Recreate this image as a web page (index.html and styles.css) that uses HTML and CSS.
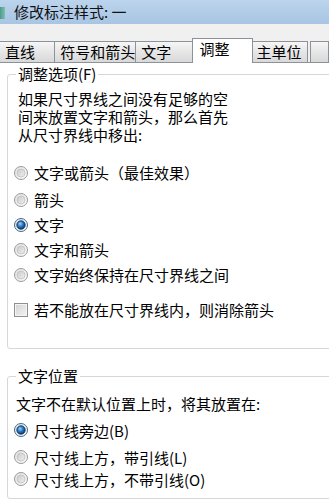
FILE: index.html
```html
<!DOCTYPE html>
<html lang="zh-CN">
<head>
<meta charset="utf-8">
<link rel="stylesheet" href="styles.css">
</head>
<body>
<div class="titlebar">
  <span class="appicon"></span>
  <span class="title">修改标注样式: 一</span>
</div>
<div class="tabbar">
  <div class="tab t1">直线</div>
  <div class="tab t2">符号和箭头</div>
  <div class="tab t3">文字</div>
  <div class="tab sel">调整</div>
  <div class="tab t5">主单位</div>
  <div class="tab t6"></div>
</div>
<div class="panel">
  <fieldset class="group g1">
    <legend>调整选项(F)</legend>
    <p class="desc d1">如果尺寸界线之间没有足够的空<br>间来放置文字和箭头，那么首先<br>从尺寸界线中移出:</p>
    <div class="opts">
      <div class="opt"><svg class="radio" viewBox="0 0 14 14"><use href="#r-off"/></svg><span>文字或箭头（最佳效果）</span></div>
      <div class="opt o2"><svg class="radio" viewBox="0 0 14 14"><use href="#r-off"/></svg><span>箭头</span></div>
      <div class="opt"><svg class="radio" viewBox="0 0 14 14"><use href="#r-on"/></svg><span>文字</span></div>
      <div class="opt"><svg class="radio" viewBox="0 0 14 14"><use href="#r-off"/></svg><span>文字和箭头</span></div>
      <div class="opt"><svg class="radio" viewBox="0 0 14 14"><use href="#r-off"/></svg><span>文字始终保持在尺寸界线之间</span></div>
    </div>
    <div class="opt check"><span class="box"></span><span>若不能放在尺寸界线内，则消除箭头</span></div>
  </fieldset>
  <fieldset class="group g2">
    <legend>文字位置</legend>
    <p class="desc d2">文字不在默认位置上时，将其放置在:</p>
    <div class="opts tight">
      <div class="opt"><svg class="radio" viewBox="0 0 14 14"><use href="#r-on"/></svg><span>尺寸线旁边(B)</span></div>
      <div class="opt p2"><svg class="radio" viewBox="0 0 14 14"><use href="#r-off"/></svg><span>尺寸线上方，带引线(L)</span></div>
      <div class="opt"><svg class="radio" viewBox="0 0 14 14"><use href="#r-off"/></svg><span>尺寸线上方，不带引线(O)</span></div>
    </div>
  </fieldset>
</div>

<svg class="defs" width="0" height="0" aria-hidden="true">
  <defs>
    <linearGradient id="gOut" x1="0" y1="0" x2="1" y2="1">
      <stop offset="0" stop-color="#e2e2e2"/>
      <stop offset="1" stop-color="#fbfbfb"/>
    </linearGradient>
    <linearGradient id="gIn" x1="0" y1="0" x2="1" y2="1">
      <stop offset="0" stop-color="#c9c9c9"/>
      <stop offset="1" stop-color="#f0f0f0"/>
    </linearGradient>
    <radialGradient id="gDot" cx="0.4" cy="0.35" r="0.7">
      <stop offset="0" stop-color="#9fd3ff"/>
      <stop offset="0.45" stop-color="#2a7fcf"/>
      <stop offset="1" stop-color="#0d2f5a"/>
    </radialGradient>
    <g id="r-off">
      <circle cx="7" cy="7" r="6.5" fill="url(#gOut)" stroke="#9a9a9a"/>
      <circle cx="7" cy="7" r="4" fill="url(#gIn)" stroke="#c2c2c2" stroke-width="0.8"/>
    </g>
    <g id="r-on">
      <circle cx="7" cy="7" r="6.5" fill="url(#gOut)" stroke="#3f6b8f"/>
      <circle cx="7" cy="7" r="4.2" fill="url(#gDot)" stroke="#0f2a48" stroke-width="0.8"/>
    </g>
  </defs>
</svg>
</body>
</html>
```
FILE: styles.css
```css
html, body {
  margin: 0;
  padding: 0;
}
body {
  width: 329px;
  height: 503px;
  overflow: hidden;
  background: #ffffff;
  color: #000;
  font-family: "Noto Sans CJK SC", "Liberation Sans", sans-serif;
  font-size: 15px;
}
.titlebar {
  height: 24px;
  display: flex;
  align-items: center;
  background: linear-gradient(#bcd4ec, #a8c5e3);
}
.appicon {
  width: 5px;
  height: 12px;
  margin-top: 1px;
  background: linear-gradient(90deg, #4e9a8a, #7cc0b0);
}
.title {
  margin-left: 9px;
  line-height: 22px;
  font-size: 15px;
  color: #111;
}
.tabbar {
  height: 38px;
  background: #f0f0f0;
  border-bottom: 1px solid #8d9198;
  display: flex;
  align-items: flex-end;
}
.tab {
  box-sizing: border-box;
  height: 21px;
  border: 1px solid #8d9198;
  border-bottom: none;
  background: linear-gradient(#f6f6f6, #e6e6e6 50%, #d9d9d9);
  padding-left: 5px;
  line-height: 19px;
  white-space: nowrap;
  margin-left: -1px;
}
.t1 { width: 59px; }
.t2 { width: 86px; }
.t3 { width: 61px; }
.sel {
  position: relative;
  z-index: 1;
  width: 63px;
  height: 25px;
  margin-bottom: -1px;
  background: #fff;
  padding-left: 6px;
  line-height: 20px;
}
.t5 { width: 59px; padding-left: 4px; }
.t6 { width: 20px; margin-left: 2px; }
.panel {
  background: #fff;
  padding-left: 7px;
}
.group {
  margin: 0 -30px 0 0;
  border: 1px solid #d3d8dc;
  border-radius: 3px;
  padding: 0 0 0 8px;
}
.group legend {
  padding: 0 2px;
  line-height: 18px;
}
.g1 {
  margin-top: 2px;
  padding-bottom: 26px;
}
.g2 {
  margin-top: 18px;
  padding-bottom: 8px;
}
.desc {
  margin: 0;
  line-height: 18px;
}
.d1 {
  margin-top: 7px;
  margin-left: 2px;
}
.d2 {
  margin-top: 10px;
}
.opts {
  margin-top: 16px;
  margin-left: -2px;
}
.opt {
  height: 25px;
  display: flex;
  align-items: center;
  white-space: nowrap;
}
.o2 { margin-top: 2px; }
.radio {
  width: 14px;
  height: 14px;
  margin-right: 6px;
  flex: none;
}
.check {
  margin-top: 10px;
  margin-left: -2px;
}
.box {
  box-sizing: border-box;
  width: 14px;
  height: 14px;
  margin-right: 6px;
  border: 1px solid #8e8f8f;
  background: linear-gradient(135deg, #d2d2d2, #f4f4f4);
  box-shadow: inset 0 0 0 1px #f4f4f4;
  flex: none;
}
.tight {
  margin-top: 6px;
}
.tight .opt {
  height: 22px;
}
.tight .p2 {
  margin-top: 5px;
}
.defs {
  position: absolute;
  width: 0;
  height: 0;
}
```
